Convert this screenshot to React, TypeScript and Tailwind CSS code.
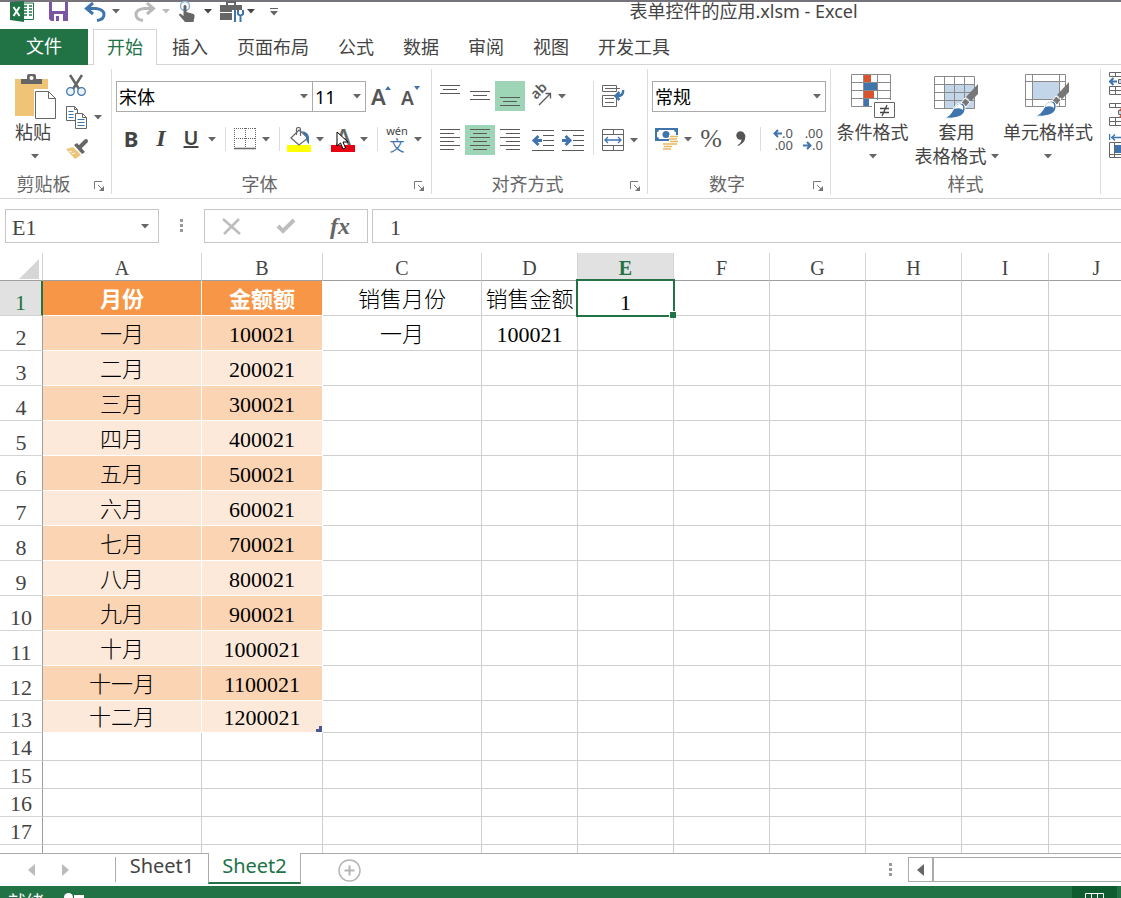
import { useState, type ReactNode } from 'react';
import clsx from 'clsx';

const UI_FONT = "font-['Noto_Sans','Noto_Sans_CJK_SC',sans-serif]";
const CELL_FONT = "font-['Liberation_Serif','Noto_Sans_CJK_SC',serif]";

const TABS = ['开始', '插入', '页面布局', '公式', '数据', '审阅', '视图', '开发工具'];

const COLUMNS = [
  { name: 'A', width: 'w-[159px]' },
  { name: 'B', width: 'w-[121px]' },
  { name: 'C', width: 'w-[159px]' },
  { name: 'D', width: 'w-[96px]' },
  { name: 'E', width: 'w-[96px]' },
  { name: 'F', width: 'w-[96px]' },
  { name: 'G', width: 'w-[96px]' },
  { name: 'H', width: 'w-[96px]' },
  { name: 'I', width: 'w-[87px]' },
  { name: 'J', width: 'w-[96px]' },
];

const ROWS: string[][] = [
  ['月份', '金额额', '销售月份', '销售金额', '1'],
  ['一月', '100021', '一月', '100021'],
  ['二月', '200021'],
  ['三月', '300021'],
  ['四月', '400021'],
  ['五月', '500021'],
  ['六月', '600021'],
  ['七月', '700021'],
  ['八月', '800021'],
  ['九月', '900021'],
  ['十月', '1000021'],
  ['十一月', '1100021'],
  ['十二月', '1200021'],
  [],
  [],
  [],
  [],
];

/* ---------- small pieces ---------- */

function Caret({ className = 'text-[#666]' }: { className?: string }) {
  return (
    <svg width="8" height="5" viewBox="0 0 8 5" className={clsx('shrink-0', className)}>
      <path d="M0 0h8L4 4.5z" fill="currentColor" />
    </svg>
  );
}

function CaretButton({ label, className }: { label: string; className?: string }) {
  return (
    <button type="button" aria-label={label} className={clsx('flex h-[30px] w-3 items-center justify-center', className)}>
      <Caret />
    </button>
  );
}

function IconButton({
  label,
  className,
  children,
}: {
  label: string;
  className?: string;
  children: ReactNode;
}) {
  return (
    <button
      type="button"
      aria-label={label}
      className={clsx('flex h-[30px] w-[30px] shrink-0 items-center justify-center', className)}
    >
      {children}
    </button>
  );
}

function Separator({ className = 'h-6' }: { className?: string }) {
  return <div className={clsx('w-px shrink-0 bg-[#dcdcdc]', className)} />;
}

function RibbonGroup({
  title,
  width,
  launcher = true,
  children,
}: {
  title: string;
  width: string;
  launcher?: boolean;
  children: ReactNode;
}) {
  return (
    <section aria-label={title} className={clsx('flex shrink-0 flex-col pb-[2px]', width)}>
      <div className="flex-1">{children}</div>
      <div className="flex h-6 items-center text-[#666]">
        <span className="flex-1 text-center">{title}</span>
        {launcher && (
          <button type="button" aria-label={`${title}设置`} className="flex w-6 justify-center pt-1">
            <svg width="11" height="11" viewBox="0 0 11 11" fill="none" stroke="#777">
              <path d="M.5 8V.5H8M4 4l4 4" />
              <path d="M10 5v5H5z" fill="#777" stroke="none" />
            </svg>
          </button>
        )}
      </div>
    </section>
  );
}

function Combo({ label, value, width }: { label: string; value: string; width: string }) {
  return (
    <div className={clsx('relative shrink-0', width)}>
      <select
        aria-label={label}
        defaultValue={value}
        className="h-[31px] w-full appearance-none border border-[#ababab] bg-white pl-[2px] text-[18px] leading-6 text-black"
      >
        <option>{value}</option>
      </select>
      <Caret className="pointer-events-none absolute right-[5px] top-[13px] text-[#666]" />
    </div>
  );
}

/* ---------- icons ---------- */

function Lines({ rows }: { rows: [number, number, number][] }) {
  return (
    <svg width="22" height="24" viewBox="0 0 22 24" stroke="#595959" fill="none">
      {rows.map(([x1, x2, y]) => (
        <path key={y} d={`M${x1} ${y + 0.5}H${x2}`} />
      ))}
    </svg>
  );
}

function IndentIcon({ out = false }: { out?: boolean }) {
  return (
    <svg width="24" height="24" viewBox="0 0 24 24" fill="none" stroke="#595959">
      <path d="M1 2.5h22M12 7.5h11M12 12.5h11M12 17.5h11M1 22.5h22" />
      {out ? (
        <path d="M11 12.5H4M7.500 8L3 12.500 7.500 17" stroke="#3f74ad" strokeWidth="3" />
      ) : (
        <path d="M1 12.500h7M4.500 8L9 12.500 4.500 17" stroke="#3f74ad" strokeWidth="3" />
      )}
    </svg>
  );
}

function PasteIcon() {
  return (
    <svg width="42" height="45" viewBox="0 0 42 45">
      <rect y="5" width="33" height="37" fill="#efc477" />
      <path d="M6 10V5h6V2q0-2 2-2h5q2 0 2 2v3h6v5z" fill="#666" />
      <circle cx="16.500" cy="4" r="2" fill="#fff" />
      <path d="M19 15h15v4h8v26H19z" fill="#fff" />
      <path d="M20.500 17.500h13l7 7v20h-20zM33.500 17.500v7h7" fill="#fff" stroke="#666" />
    </svg>
  );
}

function CutIcon() {
  return (
    <svg width="20" height="23" viewBox="0 0 20 23" fill="none">
      <path d="M4 1l9 14M16 1L7 15" stroke="#666" strokeWidth="2.500" />
      <circle cx="4.500" cy="17.500" r="3.800" fill="#eaf3fb" stroke="#3f74ad" strokeWidth="1.300" />
      <circle cx="15.500" cy="17.500" r="3.800" fill="#eaf3fb" stroke="#3f74ad" strokeWidth="1.300" />
    </svg>
  );
}

function CopyIcon() {
  return (
    <svg width="21" height="23" viewBox="0 0 21 23" stroke="#666" fill="#fff">
      <path d="M.5.500h8l3 3v11H.5zM8.500.500v3h3" />
      <path d="M2.500 5.500h5M2.500 8.500h5M2.500 11.500h5" stroke="#3f74ad" />
      <path d="M9.500 7.500h7l4 4v11h-11zM16.500 7.500v4h4" />
      <path d="M11.500 13.500h7M11.500 16.500h7M11.500 19.500h7" stroke="#3f74ad" />
    </svg>
  );
}

function FormatPainterIcon() {
  return (
    <svg width="23" height="21" viewBox="0 0 23 21">
      <path d="M0 11l7-2 8 8-6 4z" fill="#efc477" />
      <path d="M3 13l3 1M6 16l3-1" stroke="#fff" />
      <path d="M8 7l3-2 8 9-3 2z" fill="#666" />
      <path d="M14 9l6-6" stroke="#666" strokeWidth="4" strokeLinecap="round" />
      <path d="M7.500 8.500l8 8" stroke="#fff" />
    </svg>
  );
}

function BordersIcon() {
  return (
    <svg width="22" height="22" viewBox="0 0 22 22" fill="none" stroke="#666">
      <path d="M.5 0v20M21.500 0v20M11.500 0v20M0 .5h22M0 10.500h22" strokeDasharray="1 1" />
      <path d="M0 20.500h22" strokeWidth="1.500" />
    </svg>
  );
}

function FillIcon() {
  return (
    <svg width="24" height="25" viewBox="0 0 24 25" fill="none">
      <rect y="18" width="24" height="7" fill="#ffff00" />
      <path d="M12 3l9 8-9 7-8-7z" fill="#fff" stroke="#666" strokeWidth="1.200" />
      <path d="M9.500 8V2.500q0-2 2-2t2 2V9" stroke="#666" strokeWidth="1.200" />
      <path d="M15 4q6 1 7 6v7q-3-2-3-7z" fill="#3f74ad" />
    </svg>
  );
}

function MousePointer() {
  return (
    <svg width="13" height="19" viewBox="0 0 13 19" className="absolute left-2 top-[7px]">
      <path d="M1 1v14l3.500-3 2.500 6 2.500-1-2.500-6h5z" fill="#fff" stroke="#000" />
    </svg>
  );
}

function OrientationIcon() {
  return (
    <svg width="22" height="22" viewBox="0 0 22 22" fill="none" stroke="#595959" className="overflow-visible">
      <text x="0" y="0" transform="translate(6 15) rotate(-45)" fontSize="14" fontWeight="600" fill="#595959" stroke="none">
        ab
      </text>
      <path d="M9 20L20 9M15.500 8.500h5v5" strokeWidth="1.300" />
    </svg>
  );
}

function WrapIcon() {
  return (
    <svg width="24" height="24" viewBox="0 0 24 24" fill="none" stroke="#666">
      <path d="M1.500 1.500h14v6h-14zM1.500 11.500h14v11h-14zM4 4.500h15M4 14.500h9M4 18.500h9" />
      <path d="M22 6q1 6-6 6M18.500 8l-4 4 4 4" stroke="#3f74ad" strokeWidth="2.500" />
    </svg>
  );
}

function MergeIcon() {
  return (
    <svg width="24" height="24" viewBox="0 0 24 24" fill="none" stroke="#666">
      <path d="M1.500 1.500h21v21h-21zM1.500 6.500h21M1.500 17.500h21M12.500 1.500v5M12.500 17.500v5" />
      <path d="M4 12h16M7 9l-3 3 3 3M17 9l3 3-3 3" stroke="#3f74ad" strokeWidth="1.300" />
    </svg>
  );
}

function MoneyIcon() {
  return (
    <svg width="24" height="22" viewBox="0 0 24 22" fill="none">
      <rect width="23" height="13" fill="#3f74ad" />
      <path d="M2 4q2 0 2-2h15q0 2 2 2v5q-2 0-2 2H4q0-2-2-2z" fill="#fff" />
      <circle cx="11" cy="6.500" r="3.500" fill="#3f74ad" />
      <path d="M14 7h10v10H14z" fill="#fff" />
      <path d="M15 8.500h8M14 11h8M15 13.500h8M8 16h8M9 18.500h8M8 21h8M16 16h6" stroke="#e8b661" strokeWidth="1.500" />
    </svg>
  );
}

function SmallArrow({ left = false }: { left?: boolean }) {
  return (
    <svg width="9" height="9" viewBox="0 0 9 9" fill="none" stroke="#3f74ad" strokeWidth="2">
      <path d={left ? 'M9 4.500H2M5 1L1.500 4.500 5 8' : 'M0 4.500h7M4 1l3.500 3.500L4 8'} />
    </svg>
  );
}

function DecimalIcon({ increase = false }: { increase?: boolean }) {
  return (
    <span className="flex w-[22px] flex-col text-[13px] leading-3 text-[#555]">
      <span className="flex items-center justify-end">
        {increase && <SmallArrow left />}
        {increase ? '.0' : '.00'}
      </span>
      <span className="flex items-center justify-end">
        {!increase && <SmallArrow />}
        {increase ? '.00' : '.0'}
      </span>
    </span>
  );
}

function ConditionalIcon() {
  return (
    <svg width="44" height="45" viewBox="0 0 44 45" fill="none">
      <path d="M.5.500h39v32H.5zM.5 8.500h39M.5 16.500h39M.5 24.500h39M12.500.500v32M26.500.500v32" stroke="#8a8a8a" />
      <path d="M13 1h7v7h-7zM13 17h10v7H13z" fill="#d9532f" />
      <path d="M13 9h13v7H13zM13 25h5v7h-5z" fill="#3f74ad" />
      <path d="M21 26h23v19H21z" fill="#fff" />
      <path d="M23.500 28.500h20v15h-20z" fill="#fff" stroke="#666" />
      <path d="M29 34.500h9M29 38.500h9M36 31l-5 11" stroke="#444" strokeWidth="1.300" />
    </svg>
  );
}

function Brush() {
  return (
    <>
      <path d="M44 8v10l-7 7-5-4z" fill="#777" />
      <path d="M31 22l5 4-4 5-5-4z" fill="#777" stroke="#fff" />
      <path d="M11 42q6-3 8-8 2-6 7-7 6 0 5 7-1 5-7 7-6 2-13 1z" fill="#3f74ad" stroke="#fff" />
      <path d="M20 33q2-5 6-5 4 1 3 6-3-3-9-1z" fill="#fff" />
    </>
  );
}

function TableFormatIcon() {
  return (
    <svg width="46" height="45" viewBox="0 -2 46 45" fill="none">
      <path d="M10 8h31v25H10z" fill="#c3d6e9" />
      <path d="M.5.500h40v32H.5zM.5 8.500h40M.5 16.500h40M.5 24.500h40M10.500.500v32M20.500.500v32M30.500.500v32" stroke="#8a8a8a" />
      <Brush />
    </svg>
  );
}

function CellStyleIcon() {
  return (
    <svg width="46" height="45" viewBox="0 0 46 45" fill="none">
      <path d="M7 7h27v18H7z" fill="#c3d6e9" />
      <path d="M.5.500h40v32H.5zM.5 7.500h40M.5 25.500h40M7.500.500v32M34.500.500v32" stroke="#8a8a8a" />
      <Brush />
    </svg>
  );
}

function CellsIcon({ kind }: { kind: 'insert' | 'delete' | 'format' }) {
  return (
    <svg width="26" height="24" viewBox="0 0 26 24" fill="none" stroke="#666">
      {kind === 'format' ? (
        <>
          <path d="M.5 0v6M2 3.500h20M6 .5l-3 3 3 3" stroke="#3f74ad" strokeWidth="1.500" />
          <path d="M.5 8.500h25v15H.5zM5.500 8.500v15M.5 20.500h25" />
          <path d="M6 11h14v8H6z" fill="#3f74ad" stroke="none" />
        </>
      ) : (
        <>
          <path d="M.5.500h25v4H.5zM.5 14.500h25v8H.5zM.5 18.500h25M6.500 14.500v8M15.500 14.500v8M6.500.500v4" />
          <path d="M9.500 7.500h12v4h-12z" fill="#c3d6e9" />
          {kind === 'insert' ? (
            <path d="M8 9.500H1M4.500 6L1 9.500 4.500 13" stroke="#3f74ad" strokeWidth="2" />
          ) : (
            <path d="M11 6l8 8M19 6l-8 8" stroke="#d9532f" strokeWidth="2" />
          )}
        </>
      )}
    </svg>
  );
}

/* ---------- title bar ---------- */

function TitleBar() {
  return (
    <header className="flex h-[29px] shrink-0 items-start border-t-2 border-[#76747a]">
      <div className="flex h-[19px] shrink-0 items-center pl-[10px]">
        <svg width="24" height="21" viewBox="0 0 24 21" className="mr-[15px]">
          <path d="M12 2h11.500v16.500H12z" fill="#fff" stroke="#217346" />
          <path d="M14 5h3M19 5h3M14 8h3M19 8h3M14 11h3M19 11h3M14 14h3M19 14h3" stroke="#217346" strokeWidth="1.500" />
          <path d="M0 1l14-1v21L0 19z" fill="#217346" />
          <path d="M3.500 6l6 9M9.500 6l-6 9" stroke="#fff" strokeWidth="2" />
        </svg>
        <button type="button" aria-label="保存" className="mr-4">
          <svg width="19" height="19" viewBox="0 0 19 19">
            <path d="M0 0h19v19H2l-2-2z" fill="#7c55a3" />
            <path d="M3 0h13v9H3zM5 12h9v7H5z" fill="#fff" />
            <path d="M7 14h3v5H7z" fill="#7c55a3" />
          </svg>
        </button>
        <button type="button" aria-label="撤消" className="mr-[6px]">
          <svg width="22" height="20" viewBox="0 0 22 20" fill="none" stroke="#3f74ad">
            <path d="M2 6.500h10q8 1 8 6 0 5-7 6" strokeWidth="3" />
            <path d="M9 1L2.500 6.500 9 12" strokeWidth="3" />
          </svg>
        </button>
        <Caret />
        <button type="button" aria-label="恢复" className="ml-[14px] mr-[6px]">
          <svg width="22" height="20" viewBox="0 0 22 20" fill="none" stroke="#b9b9b9">
            <path d="M20 6.500H10q-8 1-8 6 0 5 7 6" strokeWidth="3" />
            <path d="M13 1l6.500 5.500L13 12" strokeWidth="3" />
          </svg>
        </button>
        <Caret className="text-[#bbb]" />
        <button type="button" aria-label="触摸/鼠标模式" className="ml-2 mr-2">
          <svg width="18" height="21" viewBox="0 0 18 21" fill="none">
            <circle cx="7" cy="5" r="4.500" stroke="#8db2d6" strokeWidth="1.500" />
            <path d="M5.500 5q1.500-2 3 0v6l7 2q1.500 1 1 3l-1 5H7l-6-7q0-2 2-1l2.500 2z" fill="#666" />
          </svg>
        </button>
        <Caret className="text-[#444]" />
        <button type="button" aria-label="工具" className="ml-2 mr-[3px]">
          <svg width="24" height="21" viewBox="0 0 24 21" fill="none">
            <path d="M7 5V1h8v4" stroke="#666" strokeWidth="2" />
            <path d="M0 4h22v7H0zM0 12h13v7H0z" fill="#666" />
            <path d="M12 9h12v12H12z" fill="#fff" />
            <path d="M15 9v12M20.500 14v7M18 9v4l2.500 2 2.500-2V9" stroke="#3f74ad" strokeWidth="2" />
          </svg>
        </button>
        <Caret className="text-[#444]" />
        <button type="button" aria-label="自定义快速访问工具栏" className="ml-[15px]">
          <svg width="8" height="8" viewBox="0 0 8 8" fill="#666">
            <path d="M0 0h8v1H0zM0 3h8L4 7.500z" />
          </svg>
        </button>
      </div>
      <h1 className="flex-1 pl-[88px] text-center leading-[18px] text-[#444]">表单控件的应用.xlsm - Excel</h1>
    </header>
  );
}

function TabStrip({ active, onSelect }: { active: string; onSelect: (tab: string) => void }) {
  return (
    <nav className="flex h-9 shrink-0 border-b border-[#d4d4d4]">
      <button type="button" className="h-9 w-[88px] shrink-0 bg-[#217346] pb-[2px] text-white">
        文件
      </button>
      <div className="ml-[5px] flex gap-px">
        {TABS.map((tab) => (
          <button
            key={tab}
            type="button"
            onClick={() => onSelect(tab)}
            className={clsx(
              'h-9 shrink-0 border border-b-0 px-[13px] pb-[2px]',
              tab === active ? 'border-[#d4d4d4] bg-white text-[#217346]' : 'border-transparent text-[#444]',
            )}
          >
            {tab}
          </button>
        ))}
      </div>
    </nav>
  );
}

/* ---------- ribbon ---------- */

function ClipboardGroup() {
  return (
    <RibbonGroup title="剪贴板" width="w-[111px]">
      <div className="flex pt-[9px]">
        <button type="button" className="flex w-[66px] flex-col items-start pl-[15px]">
          <PasteIcon />
          <span className="pt-px text-[#444]">粘贴</span>
          <span className="flex h-6 w-10 items-center justify-center">
            <Caret />
          </span>
        </button>
        <div className="flex flex-col gap-[9px]">
          <button type="button" aria-label="剪切">
            <CutIcon />
          </button>
          <div className="flex items-center gap-[7px]">
            <button type="button" aria-label="复制">
              <CopyIcon />
            </button>
            <Caret />
          </div>
          <button type="button" aria-label="格式刷">
            <FormatPainterIcon />
          </button>
        </div>
      </div>
    </RibbonGroup>
  );
}

function FontGroup() {
  return (
    <RibbonGroup title="字体" width="w-[319px]">
      <div className="flex pl-1 pt-4">
        <Combo label="字体名称" value="宋体" width="w-[197px]" />
        <div className="-ml-px">
          <Combo label="字号" value="11" width="w-[54px]" />
        </div>
        <IconButton label="增大字号">
          <svg width="22" height="24" viewBox="0 0 22 24" className="overflow-visible">
            <text x="1" y="21" fontSize="22" fontWeight="600" fill="#555">A</text>
            <path d="M15 6l3-4 3 4z" fill="#3f74ad" />
          </svg>
        </IconButton>
        <IconButton label="减小字号">
          <svg width="22" height="24" viewBox="0 0 22 24" className="overflow-visible">
            <text x="1" y="21" fontSize="19" fontWeight="600" fill="#555">A</text>
            <path d="M14 2h6l-3 4z" fill="#3f74ad" />
          </svg>
        </IconButton>
      </div>
      <div className="flex items-center pl-1 pt-3">
        <IconButton label="加粗" className="pb-[2px] text-[22px] font-bold text-[#444]">B</IconButton>
        <IconButton label="倾斜" className="pb-[2px] font-['Liberation_Serif',serif] text-[24px] font-bold italic text-[#444]">I</IconButton>
        <IconButton label="下划线" className="pb-[2px] text-[20px] font-semibold text-[#444] underline">U</IconButton>
        <CaretButton label="下划线选项" />
        <Separator className="ml-[7px] h-6" />
        <IconButton label="边框" className="ml-1">
          <BordersIcon />
        </IconButton>
        <CaretButton label="边框选项" />
        <Separator className="ml-[7px] h-6" />
        <IconButton label="填充颜色" className="ml-1">
          <FillIcon />
        </IconButton>
        <CaretButton label="填充颜色选项" />
        <IconButton label="字体颜色" className="relative ml-[2px]">
          <svg width="24" height="25" viewBox="0 0 24 25" className="overflow-visible">
            <rect y="18" width="24" height="7" fill="#e60012" />
            <text x="5" y="18" fontSize="22" fontWeight="600" fill="#666">A</text>
          </svg>
          <MousePointer />
        </IconButton>
        <CaretButton label="字体颜色选项" />
        <Separator className="ml-[7px] h-6" />
        <IconButton label="拼音指南" className="ml-1 flex-col">
          <span className="text-[11px] leading-3 text-[#444]">wén</span>
          <span className="text-[15px] leading-4 text-[#3f74ad]">文</span>
        </IconButton>
        <CaretButton label="拼音选项" />
      </div>
    </RibbonGroup>
  );
}

function AlignmentGroup() {
  return (
    <RibbonGroup title="对齐方式" width="w-[215px]">
      <div className="flex pt-4">
        <div className="flex w-[161px] flex-col gap-[14px] pl-[3px]">
          <div className="flex">
            <IconButton label="顶端对齐">
              <Lines rows={[[1, 21, 1], [4, 18, 5], [1, 21, 9]]} />
            </IconButton>
            <IconButton label="垂直居中">
              <Lines rows={[[1, 21, 7], [4, 18, 11], [1, 21, 15]]} />
            </IconButton>
            <IconButton label="底端对齐" className="bg-[#9fd5b7]">
              <Lines rows={[[1, 21, 13], [4, 18, 17], [1, 21, 21]]} />
            </IconButton>
            <IconButton label="方向" className="ml-px">
              <OrientationIcon />
            </IconButton>
            <CaretButton label="方向选项" />
          </div>
          <div className="flex">
            <IconButton label="左对齐">
              <Lines rows={[[1, 21, 1], [1, 15, 5], [1, 21, 9], [1, 15, 13], [1, 21, 17], [1, 15, 21]]} />
            </IconButton>
            <IconButton label="居中" className="bg-[#9fd5b7]">
              <Lines rows={[[1, 21, 1], [4, 18, 5], [1, 21, 9], [4, 18, 13], [1, 21, 17], [4, 18, 21]]} />
            </IconButton>
            <IconButton label="右对齐">
              <Lines rows={[[1, 21, 1], [7, 21, 5], [1, 21, 9], [7, 21, 13], [1, 21, 17], [7, 21, 21]]} />
            </IconButton>
            <IconButton label="减少缩进量" className="ml-[3px]">
              <IndentIcon out />
            </IconButton>
            <IconButton label="增加缩进量">
              <IndentIcon />
            </IconButton>
          </div>
        </div>
        <Separator className="h-[74px]" />
        <div className="flex flex-col gap-[14px] pl-1">
          <IconButton label="自动换行">
            <WrapIcon />
          </IconButton>
          <div className="flex">
            <IconButton label="合并后居中">
              <MergeIcon />
            </IconButton>
            <CaretButton label="合并选项" />
          </div>
        </div>
      </div>
    </RibbonGroup>
  );
}

function NumberGroup() {
  return (
    <RibbonGroup title="数字" width="w-[182px]">
      <div className="pl-1 pt-4">
        <Combo label="数字格式" value="常规" width="w-[174px]" />
        <div className="flex items-center pt-3">
          <IconButton label="会计数字格式">
            <MoneyIcon />
          </IconButton>
          <CaretButton label="会计格式选项" />
          <IconButton label="百分比样式" className="ml-[2px] font-['Liberation_Serif',serif] text-[26px] text-[#555]">%</IconButton>
          <IconButton label="千位分隔样式">
            <svg width="10" height="16" viewBox="0 0 10 16" fill="#555">
              <circle cx="4.500" cy="4.500" r="4.200" />
              <path d="M4 6l5-3q2 8-7 12l-.5-1q4-2 4-6z" />
            </svg>
          </IconButton>
          <Separator className="ml-1 h-6" />
          <IconButton label="增加小数位数" className="ml-[6px]">
            <DecimalIcon increase />
          </IconButton>
          <IconButton label="减少小数位数">
            <DecimalIcon />
          </IconButton>
        </div>
      </div>
    </RibbonGroup>
  );
}

function StylesGroup() {
  return (
    <RibbonGroup title="样式" width="w-[269px]" launcher={false}>
      <div className="flex pt-[9px] text-[#444]">
        <button type="button" className="flex w-[83px] flex-col items-center">
          <ConditionalIcon />
          <span className="whitespace-nowrap pt-px">条件格式</span>
          <span className="flex h-6 items-center">
            <Caret />
          </span>
        </button>
        <button type="button" className="flex w-[85px] flex-col items-center">
          <TableFormatIcon />
          <span className="pt-px">套用</span>
          <span className="flex h-6 items-center gap-1 whitespace-nowrap">
            表格格式
            <Caret />
          </span>
        </button>
        <button type="button" className="flex w-[98px] flex-col items-center">
          <CellStyleIcon />
          <span className="whitespace-nowrap pt-px">单元格样式</span>
          <span className="flex h-6 items-center">
            <Caret />
          </span>
        </button>
      </div>
    </RibbonGroup>
  );
}

function Ribbon() {
  return (
    <div className="flex h-[134px] shrink-0 overflow-hidden border-b border-[#d4d4d4]">
      <ClipboardGroup />
      <Separator className="my-1" />
      <FontGroup />
      <Separator className="my-1" />
      <AlignmentGroup />
      <Separator className="my-1" />
      <NumberGroup />
      <Separator className="my-1" />
      <StylesGroup />
      <Separator className="my-1" />
      <div className="flex shrink-0 flex-col gap-[7px] pl-2 pt-[7px]">
        <button type="button" aria-label="插入单元格">
          <CellsIcon kind="insert" />
        </button>
        <button type="button" aria-label="删除单元格">
          <CellsIcon kind="delete" />
        </button>
        <button type="button" aria-label="单元格格式">
          <CellsIcon kind="format" />
        </button>
      </div>
    </div>
  );
}

function Dots() {
  return (
    <svg width="3" height="14" viewBox="0 0 3 14" fill="#999">
      <path d="M0 0h3v3H0zM0 5h3v3H0zM0 10h3v3H0z" />
    </svg>
  );
}

function FormulaBar() {
  return (
    <div className={clsx('flex shrink-0 items-center py-[10px] pl-[5px] text-[22px] text-[#444]', CELL_FONT)}>
      <div className="flex h-[34px] w-[154px] shrink-0 items-center border border-[#c6c6c6] pr-[9px]">
        <input aria-label="名称框" defaultValue="E1" className="w-full min-w-0 pl-[6px] pt-[3px] outline-none" />
        <Caret />
      </div>
      <div className="flex w-[45px] shrink-0 justify-center">
        <Dots />
      </div>
      <div className="flex h-[34px] w-[164px] shrink-0 items-center justify-between border border-[#c6c6c6] px-[17px]">
        <button type="button" aria-label="取消">
          <svg width="19" height="17" viewBox="0 0 19 17" stroke="#bdbdbd" strokeWidth="2.500">
            <path d="M1 1l17 15M17 1L2 16" />
          </svg>
        </button>
        <button type="button" aria-label="输入">
          <svg width="20" height="16" viewBox="0 0 20 16" fill="none" stroke="#bdbdbd" strokeWidth="4">
            <path d="M2 8l5 5L18 2" />
          </svg>
        </button>
        <button type="button" aria-label="插入函数" className="text-[24px] font-bold italic leading-6 text-[#666]">
          fx
        </button>
      </div>
      <input
        aria-label="编辑栏"
        defaultValue="1"
        className="ml-1 h-[34px] min-w-0 flex-1 border border-r-0 border-[#c6c6c6] pl-[17px] pt-[3px] outline-none"
      />
    </div>
  );
}

/* ---------- sheet ---------- */

function rowHeight(row: number) {
  if (row <= 12) return 'h-[35px]';
  return row === 13 ? 'h-8' : 'h-7';
}

function cellStyle(row: number, col: number) {
  const inTable = col < 2 && row <= 13;
  if (!inTable) return 'border-[#cfcfcf] text-black';
  if (row === 1) return 'border-white bg-[#f79646] font-bold text-white';
  return row % 2 === 0 ? 'border-white bg-[#fbd4b4] text-black' : 'border-white bg-[#fde9d9] text-black';
}

function Sheet() {
  return (
    <main className={clsx('flex min-h-0 flex-1 flex-col overflow-hidden', CELL_FONT)}>
      <table className="w-max table-fixed border-separate border-spacing-0 text-[22px] font-light leading-7">
        <colgroup>
          <col className="w-[43px]" />
          {COLUMNS.map((c) => (
            <col key={c.name} className={c.width} />
          ))}
        </colgroup>
        <thead>
          <tr>
            <th className="h-7 border-b border-r border-b-[#9f9f9f] border-r-[#d4d4d4] p-0">
              <svg width="20" height="20" viewBox="0 0 20 20" className="ml-auto mr-[3px] mt-[4px]">
                <path d="M20 0v20H0z" fill="#d6d6d6" />
              </svg>
            </th>
            {COLUMNS.map((c) => (
              <th
                key={c.name}
                scope="col"
                className={clsx(
                  'h-7 border-b border-r border-b-[#9f9f9f] border-r-[#d4d4d4] p-0 pt-[3px] text-[20px] leading-6',
                  c.name === 'E' ? 'bg-[#e1e1e1] font-bold text-[#217346]' : 'font-normal text-[#444]',
                )}
              >
                {c.name}
              </th>
            ))}
          </tr>
        </thead>
        <tbody>
          {ROWS.map((cells, i) => {
            const row = i + 1;
            return (
              <tr key={row}>
                <th
                  scope="row"
                  className={clsx(
                    'border-b border-b-[#d4d4d4] p-0 align-bottom font-normal leading-6',
                    rowHeight(row),
                    row === 1
                      ? 'border-r-2 border-r-[#217346] bg-[#e1e1e1] text-[#217346]'
                      : 'border-r border-r-[#9f9f9f] text-[#444]',
                  )}
                >
                  {row}
                </th>
                {COLUMNS.map((c, col) => {
                  const selected = row === 1 && c.name === 'E';
                  return (
                    <td
                      key={c.name}
                      className={clsx(
                        'relative whitespace-nowrap border-b border-r p-0 text-center',
                        selected ? 'z-10 align-bottom leading-6' : 'align-middle',
                        !selected && cells[col] && 'pt-[3px]',
                        cellStyle(row, col),
                      )}
                    >
                      {cells[col]}
                      {selected && (
                        <div className="pointer-events-none absolute -inset-[2px] border-2 border-[#217346]">
                          <div className="absolute -bottom-[3px] -right-[3px] size-[7px] border-l border-t border-white bg-[#217346]" />
                        </div>
                      )}
                      {row === 13 && c.name === 'B' && (
                        <svg width="6" height="6" viewBox="0 0 6 6" className="absolute bottom-0 right-0">
                          <path d="M3 0h3v6H0V3h3z" fill="#4a5696" />
                        </svg>
                      )}
                    </td>
                  );
                })}
              </tr>
            );
          })}
          {/* last row, mostly hidden behind the sheet tabs */}
          <tr>
            <th className="h-7 border-r border-r-[#9f9f9f] p-0" />
            {COLUMNS.map((c) => (
              <td key={c.name} className="border-r border-[#cfcfcf] p-0" />
            ))}
          </tr>
        </tbody>
      </table>
    </main>
  );
}

function SheetTabs() {
  return (
    <div className="flex h-[33px] shrink-0 border-t border-[#ababab] text-[20px] leading-6">
      <div className="flex w-[115px] shrink-0 items-center gap-[26px] pl-7">
        <button type="button" aria-label="上一个工作表">
          <svg width="8" height="12" viewBox="0 0 8 12" fill="#bbb">
            <path d="M7 0v12L0 6z" />
          </svg>
        </button>
        <button type="button" aria-label="下一个工作表">
          <svg width="8" height="12" viewBox="0 0 8 12" fill="#bbb">
            <path d="M0 0v12l7-6z" />
          </svg>
        </button>
      </div>
      <div className="mt-[3px] h-[25px] w-px shrink-0 bg-[#ababab]" />
      <button type="button" className="h-6 w-[92px] shrink-0 text-[#444]">
        Sheet1
      </button>
      <button
        type="button"
        className="-mt-px h-[31px] w-[93px] shrink-0 border-x border-b-2 border-x-[#ababab] border-b-[#217346] bg-white pb-1 text-[#217346]"
      >
        Sheet2
      </button>
      <button type="button" aria-label="新工作表" className="ml-[37px] self-center">
        <svg width="23" height="23" viewBox="0 0 23 23" fill="none" stroke="#b5b5b5" strokeWidth="1.500">
          <circle cx="11.500" cy="11.500" r="10.500" />
          <path d="M6.500 11.500h10M11.500 6.500v10" strokeWidth="2" />
        </svg>
      </button>
      <div className="flex flex-1 items-center justify-end pr-4">
        <Dots />
      </div>
      <div className="mt-[3px] flex h-[25px] w-[213px] shrink-0 border border-r-0 border-[#ababab]">
        <button type="button" aria-label="向左滚动" className="flex w-[25px] items-center justify-center border-r-2 border-[#ababab]">
          <svg width="7" height="12" viewBox="0 0 7 12" fill="#666">
            <path d="M7 0v12L0 6z" />
          </svg>
        </button>
      </div>
    </div>
  );
}

function StatusBar() {
  return (
    <footer className="flex h-8 shrink-0 items-center bg-[#217346] text-white">
      <span className="pl-2">就绪</span>
      <svg width="20" height="18" viewBox="0 0 20 18" fill="#fff" className="ml-5">
        <circle cx="4.500" cy="4.500" r="4.500" />
        <path d="M10 2h10v15H2v-7h8z" />
      </svg>
      <button type="button" aria-label="普通视图" className="ml-auto mr-1 flex h-full w-[45px] items-center justify-center bg-[#0f5c31]">
        <svg width="19" height="18" viewBox="0 0 19 18" fill="none" stroke="#fff">
          <path d="M.5.500h18v17H.5zM.5 6.500h18M.5 12.500h18M6.500.500v17M12.500.500v17" />
        </svg>
      </button>
    </footer>
  );
}

export default function App() {
  const [tab, setTab] = useState('开始');

  return (
    <div className="h-screen overflow-hidden bg-white">
      {/* the status bar runs past the bottom edge of the window */}
      <div className={clsx('flex h-[calc(100vh+20px)] flex-col text-[18px] leading-6', UI_FONT)}>
        <TitleBar />
        <TabStrip active={tab} onSelect={setTab} />
        <Ribbon />
        <FormulaBar />
        <Sheet />
        <SheetTabs />
        <StatusBar />
      </div>
    </div>
  );
}
